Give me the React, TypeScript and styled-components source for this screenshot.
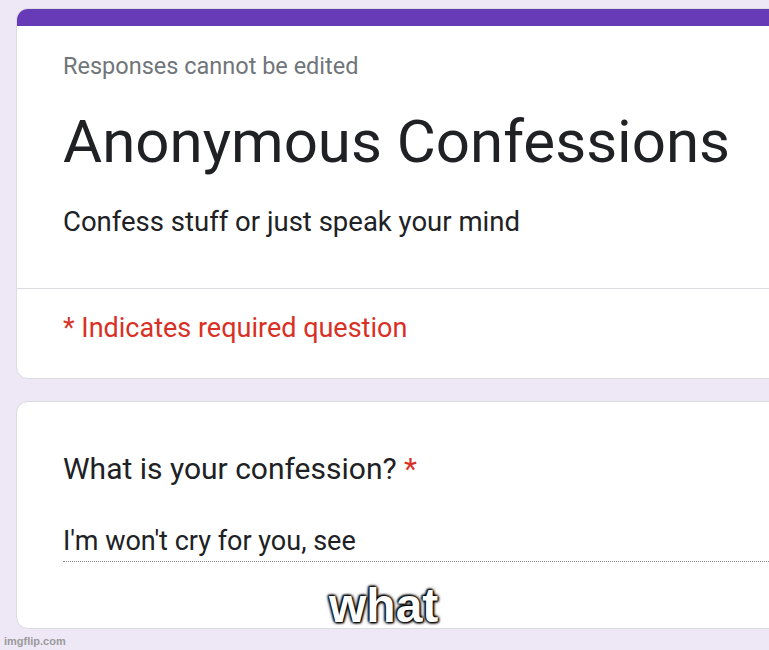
import * as React from "react";
import styled, { createGlobalStyle } from "styled-components";

const GlobalStyle = createGlobalStyle`
  html, body {
    margin: 0;
    padding: 0;
    background: #ede7f6;
    overflow: hidden;
  }
`;

const Page = styled.div`
  position: relative;
  width: 769px;
  height: 650px;
  background: #ede7f6;
  overflow: hidden;
  padding: 8px 0 0 16px;
  box-sizing: border-box;
  font-family: Roboto, "Liberation Sans", sans-serif;
`;

const Card = styled.div`
  width: 800px;
  background: #fff;
  border: 1px solid #dadce0;
  border-radius: 12px;
  box-sizing: border-box;
  overflow: hidden;
  margin-bottom: 22px;
`;

const TopBar = styled.div`
  height: 18px;
  background: #673ab7;
  margin: -1px -1px 0 -1px;
`;

const Section = styled.div<{ $top: number; $bottom: number }>`
  padding: ${(p) => p.$top}px 0 ${(p) => p.$bottom}px 46px;
`;

const Divider = styled.div`
  height: 1px;
  background: #dadce0;
`;

const Notice = styled.div`
  font-size: 23.5px;
  line-height: 24px;
  color: #70757a;
`;

const Title = styled.h1`
  margin: 32px 0 0;
  font-size: 60px;
  font-weight: 400;
  line-height: 64px;
  color: #202124;
`;

const Description = styled.div`
  margin-top: 32px;
  font-size: 27.5px;
  line-height: 32px;
  color: #202124;
`;

const Required = styled.div`
  font-size: 27px;
  line-height: 28px;
  color: #d93025;
`;

const Question = styled.div`
  font-size: 30px;
  line-height: 32px;
  color: #202124;
`;

const Star = styled.span`
  color: #d93025;
`;

const Answer = styled.div`
  margin-top: 42px;
  font-size: 27px;
  line-height: 28px;
  padding-bottom: 6px;
  color: #202124;
  border-bottom: 1px dotted #8a8a8a;
`;

const Caption = styled.div`
  position: absolute;
  left: 329px;
  top: 578px;
  font-family: "Liberation Sans", Arial, sans-serif;
  font-weight: 700;
  font-size: 48px;
  line-height: 56px;
  color: #fff;
  text-shadow: 0 0 3px #000, 0 0 3px #000, 0 0 4px #000, 1px 1px 2px #000, -1px -1px 2px #000;
`;

const Watermark = styled.div`
  position: absolute;
  left: 4px;
  bottom: 3px;
  font-family: "Liberation Sans", Arial, sans-serif;
  font-weight: 700;
  font-size: 11px;
  color: #9a9a9a;
`;

const App: React.FC = () => {
  return (
    <Page>
      <GlobalStyle />
      <Card>
        <TopBar />
        <Section $top={28} $bottom={50}>
          <Notice>Responses cannot be edited</Notice>
          <Title>Anonymous Confessions</Title>
          <Description>Confess stuff or just speak your mind</Description>
        </Section>
        <Divider />
        <Section $top={25} $bottom={36}>
          <Required>* Indicates required question</Required>
        </Section>
      </Card>
      <Card>
        <Section $top={51} $bottom={66}>
          <Question>
            What is your confession? <Star>*</Star>
          </Question>
          <Answer>I'm won't cry for you, see</Answer>
        </Section>
      </Card>
      <Caption>what</Caption>
      <Watermark>imgflip.com</Watermark>
    </Page>
  );
};

export default App;
